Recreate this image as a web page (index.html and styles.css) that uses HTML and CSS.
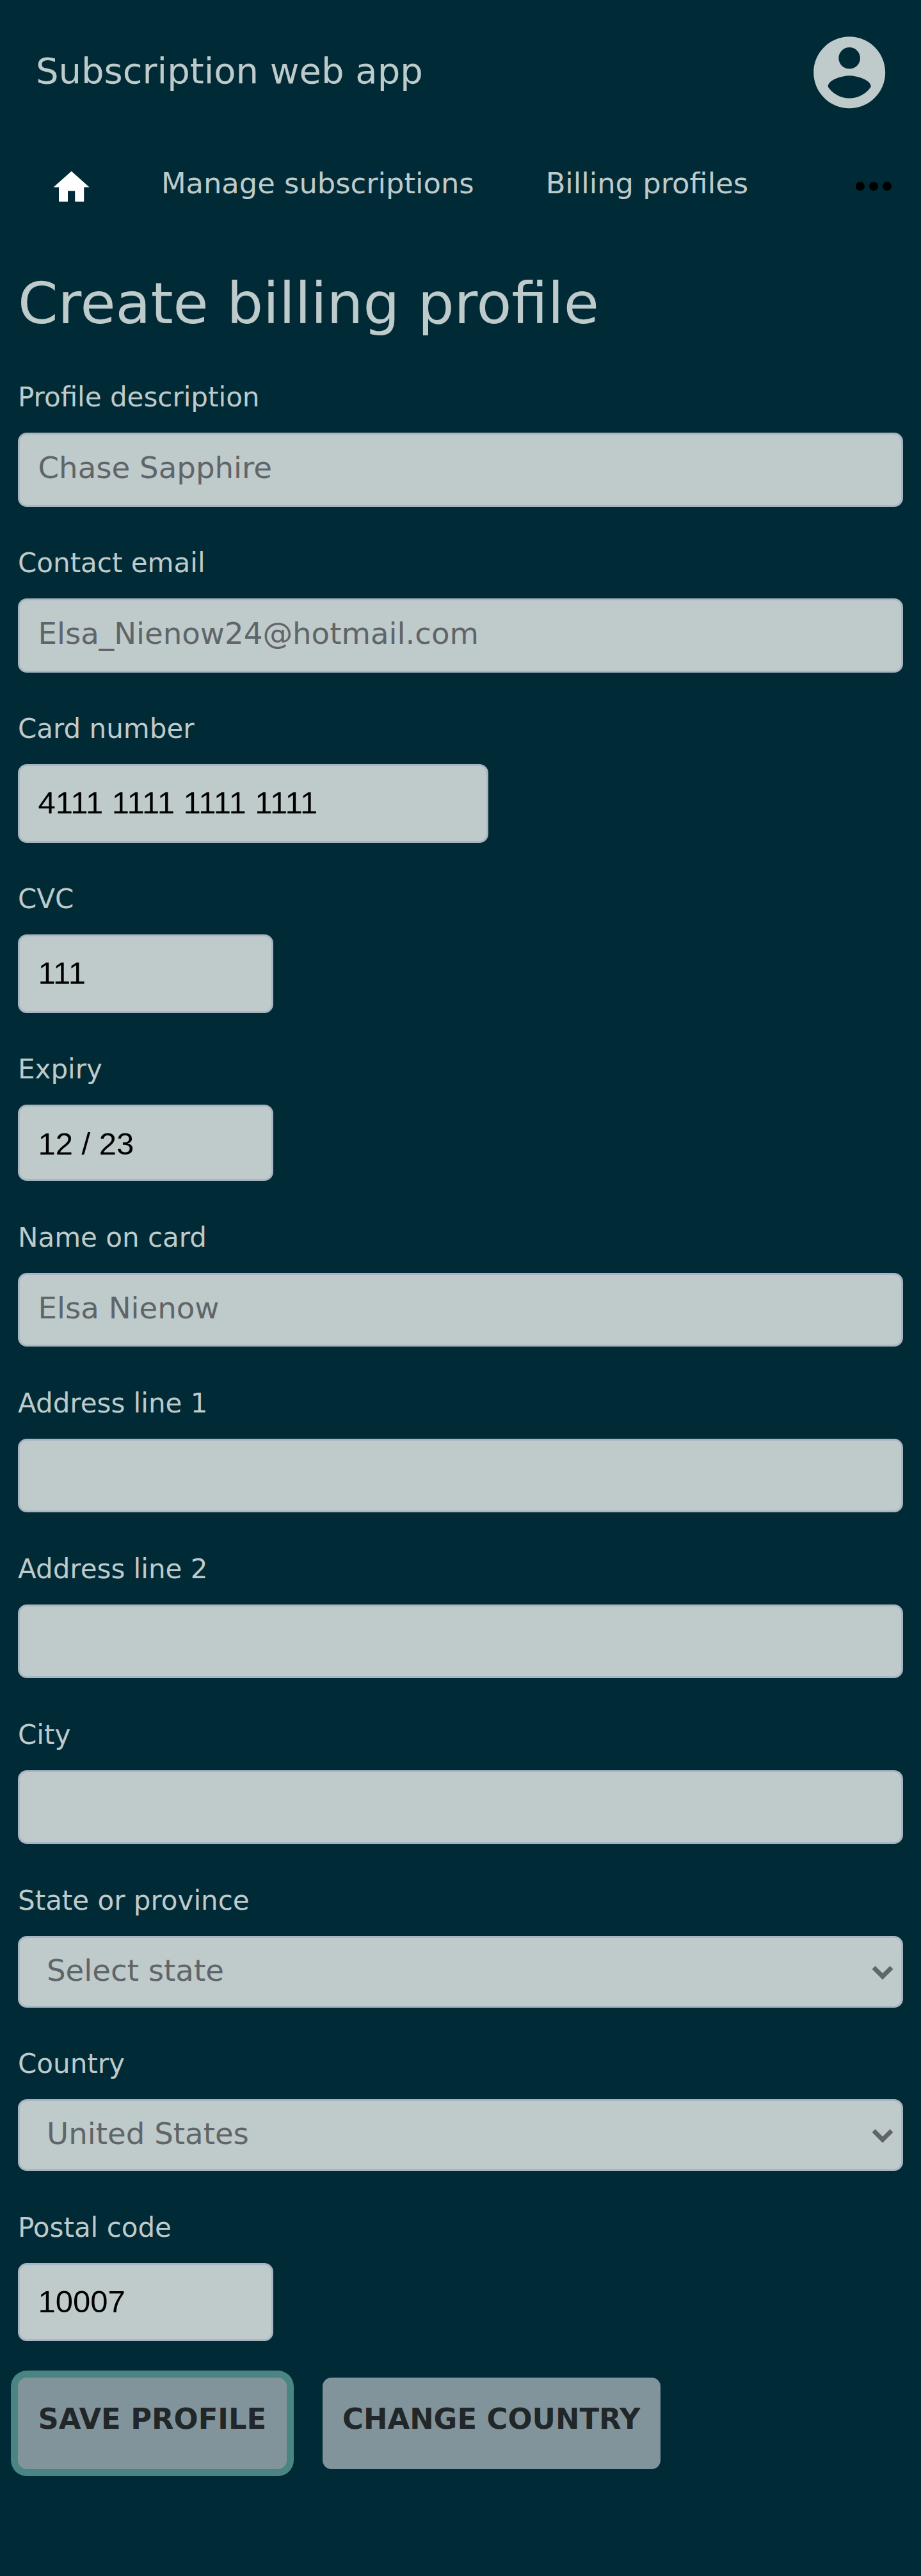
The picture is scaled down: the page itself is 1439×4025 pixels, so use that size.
FILE: index.html
```html
<!DOCTYPE html>
<html lang="en">
<head>
<meta charset="utf-8">
<title>Subscription web app</title>
<link rel="stylesheet" href="styles.css">
</head>
<body>
<header class="header">
  <span class="brand">Subscription web app</span>
  <svg class="avatar" viewBox="0 0 24 24"><path d="M12 2C6.48 2 2 6.48 2 12s4.48 10 10 10 10-4.48 10-10S17.52 2 12 2zm0 3c1.66 0 3 1.34 3 3s-1.34 3-3 3-3-1.34-3-3 1.34-3 3-3zm0 14.2c-2.5 0-4.71-1.28-6-3.22.03-1.99 4-3.08 6-3.08 1.99 0 5.97 1.09 6 3.08-1.29 1.94-3.5 3.22-6 3.22z"/></svg>
</header>
<nav class="nav">
  <a class="nav-home"><svg class="home-icon" viewBox="0 0 24 24"><path d="M10 20v-6h4v6h5v-8h3L12 3 2 12h3v8z"/></svg></a>
  <a class="nav-link">Manage subscriptions</a>
  <a class="nav-link">Billing profiles</a>
  <svg class="more-icon" viewBox="0 0 24 24"><circle cx="6" cy="12" r="2"/><circle cx="12" cy="12" r="2"/><circle cx="18" cy="12" r="2"/></svg>
</nav>
<main class="main">
  <h1 class="heading">Create billing profile</h1>
  <form class="form">
    <div class="field"><label class="label" for="description">Profile description</label><input class="input" id="description" placeholder="Chase Sapphire"></div>
    <div class="field"><label class="label" for="email">Contact email</label><input class="input" id="email" placeholder="Elsa_Nienow24@hotmail.com"></div>
    <div class="field"><label class="label" for="card">Card number</label><input class="input input-hosted input-card" id="card" value="4111 1111 1111 1111"></div>
    <div class="field"><label class="label" for="cvc">CVC</label><input class="input input-hosted" id="cvc" value="111"></div>
    <div class="field"><label class="label" for="expiry">Expiry</label><input class="input input-hosted input-expiry" id="expiry" value="12 / 23"></div>
    <div class="field"><label class="label" for="name">Name on card</label><input class="input" id="name" placeholder="Elsa Nienow"></div>
    <div class="field"><label class="label" for="address1">Address line 1</label><input class="input" id="address1"></div>
    <div class="field"><label class="label" for="address2">Address line 2</label><input class="input" id="address2"></div>
    <div class="field"><label class="label" for="city">City</label><input class="input" id="city"></div>
    <div class="field"><label class="label" for="state">State or province</label>
      <div class="select-wrap"><select class="input select" id="state"><option>Select state</option></select><svg class="chevron" viewBox="0 0 34 23"><path d="M3 3.3l14 14 14-14"/></svg></div></div>
    <div class="field"><label class="label" for="country">Country</label>
      <div class="select-wrap"><select class="input select" id="country"><option>United States</option></select><svg class="chevron" viewBox="0 0 34 23"><path d="M3 3.3l14 14 14-14"/></svg></div></div>
    <div class="field"><label class="label" for="postal">Postal code</label><input class="input input-hosted" id="postal" value="10007"></div>
    <div class="actions">
      <button class="button button-focus" type="button">Save profile</button>
      <button class="button" type="button">Change country</button>
    </div>
  </form>
</main>
</body>
</html>
```
FILE: styles.css
```css
* { box-sizing: border-box; }

body {
  margin: 0;
  min-height: 4025px;
  background: #002b36;
  color: #bfcacb;
  font-family: "DejaVu Sans", sans-serif;
}

.header {
  display: flex;
  justify-content: space-between;
  align-items: flex-start;
  height: 180px;
  padding: 45.8px 44.5px 0 56px;
}

.brand {
  padding-top: 32.2px;
  font-size: 56px;
  line-height: 65px;
}

.avatar {
  width: 134.4px;
  height: 134.4px;
  fill: #bfcacb;
}

.nav {
  display: flex;
  align-items: flex-start;
  height: 220px;
  padding: 69px 32.5px 0 78.4px;
  font-size: 44.8px;
  line-height: 52px;
}

.nav-home { padding-top: 10px; margin-right: 106.3px; }
.home-icon { display: block; width: 67.2px; height: 67.2px; fill: #fff; }
.nav-link { padding-top: 12px; margin-right: 112px; white-space: nowrap; }
.more-icon { width: 84px; height: 84px; margin-left: auto; fill: #000; }

.main { padding: 0 28.5px 0 28px; }

.heading {
  height: 196px;
  margin: 0;
  padding-top: 22px;
  font-size: 89.6px;
  font-weight: 400;
  line-height: 104px;
}

.form { display: flex; flex-direction: column; gap: 63.25px; }
.field { display: flex; flex-direction: column; gap: 31.25px; }
.label { font-size: 42px; line-height: 49px; }

.input {
  appearance: none;
  display: block;
  width: 100%;
  height: 115.5px;
  margin: 0;
  padding: 23px 28.5px 29px;
  border: 3px solid #a9b5c2;
  border-radius: 14px;
  outline: 0;
  background: #bfcacb;
  color: #5f6568;
  font-family: "DejaVu Sans", sans-serif;
  font-size: 46.667px;
}

.input::placeholder { color: #5f6568; opacity: 1; }

.input-hosted {
  width: 399px;
  height: 122.5px;
  padding: 26.5px 28.5px 29.5px;
  color: #000;
  font-family: "Liberation Sans", sans-serif;
  font-size: 49px;
}

.input-card { width: 735px; }
.input-expiry { height: 119px; padding: 27.5px 28.5px 25px; }

.select-wrap { position: relative; }
.select { height: 112px; padding: 22px 42px 26px; }

.chevron {
  position: absolute;
  top: 46px;
  right: 14.5px;
  width: 34px;
  height: 23px;
  fill: none;
  stroke: #5f6568;
  stroke-width: 7;
  pointer-events: none;
}

.actions { display: flex; gap: 56px; margin-top: -7px; }

.button {
  height: 143.5px;
  padding: 0 31.5px 13px;
  border: 0;
  border-radius: 14px;
  background: #82949b;
  color: #212629;
  font-family: "DejaVu Sans", sans-serif;
  font-size: 44.8px;
  font-weight: 700;
  text-transform: uppercase;
  white-space: nowrap;
}

.button-focus { box-shadow: 0 0 0 11px #4a8583; }
```
